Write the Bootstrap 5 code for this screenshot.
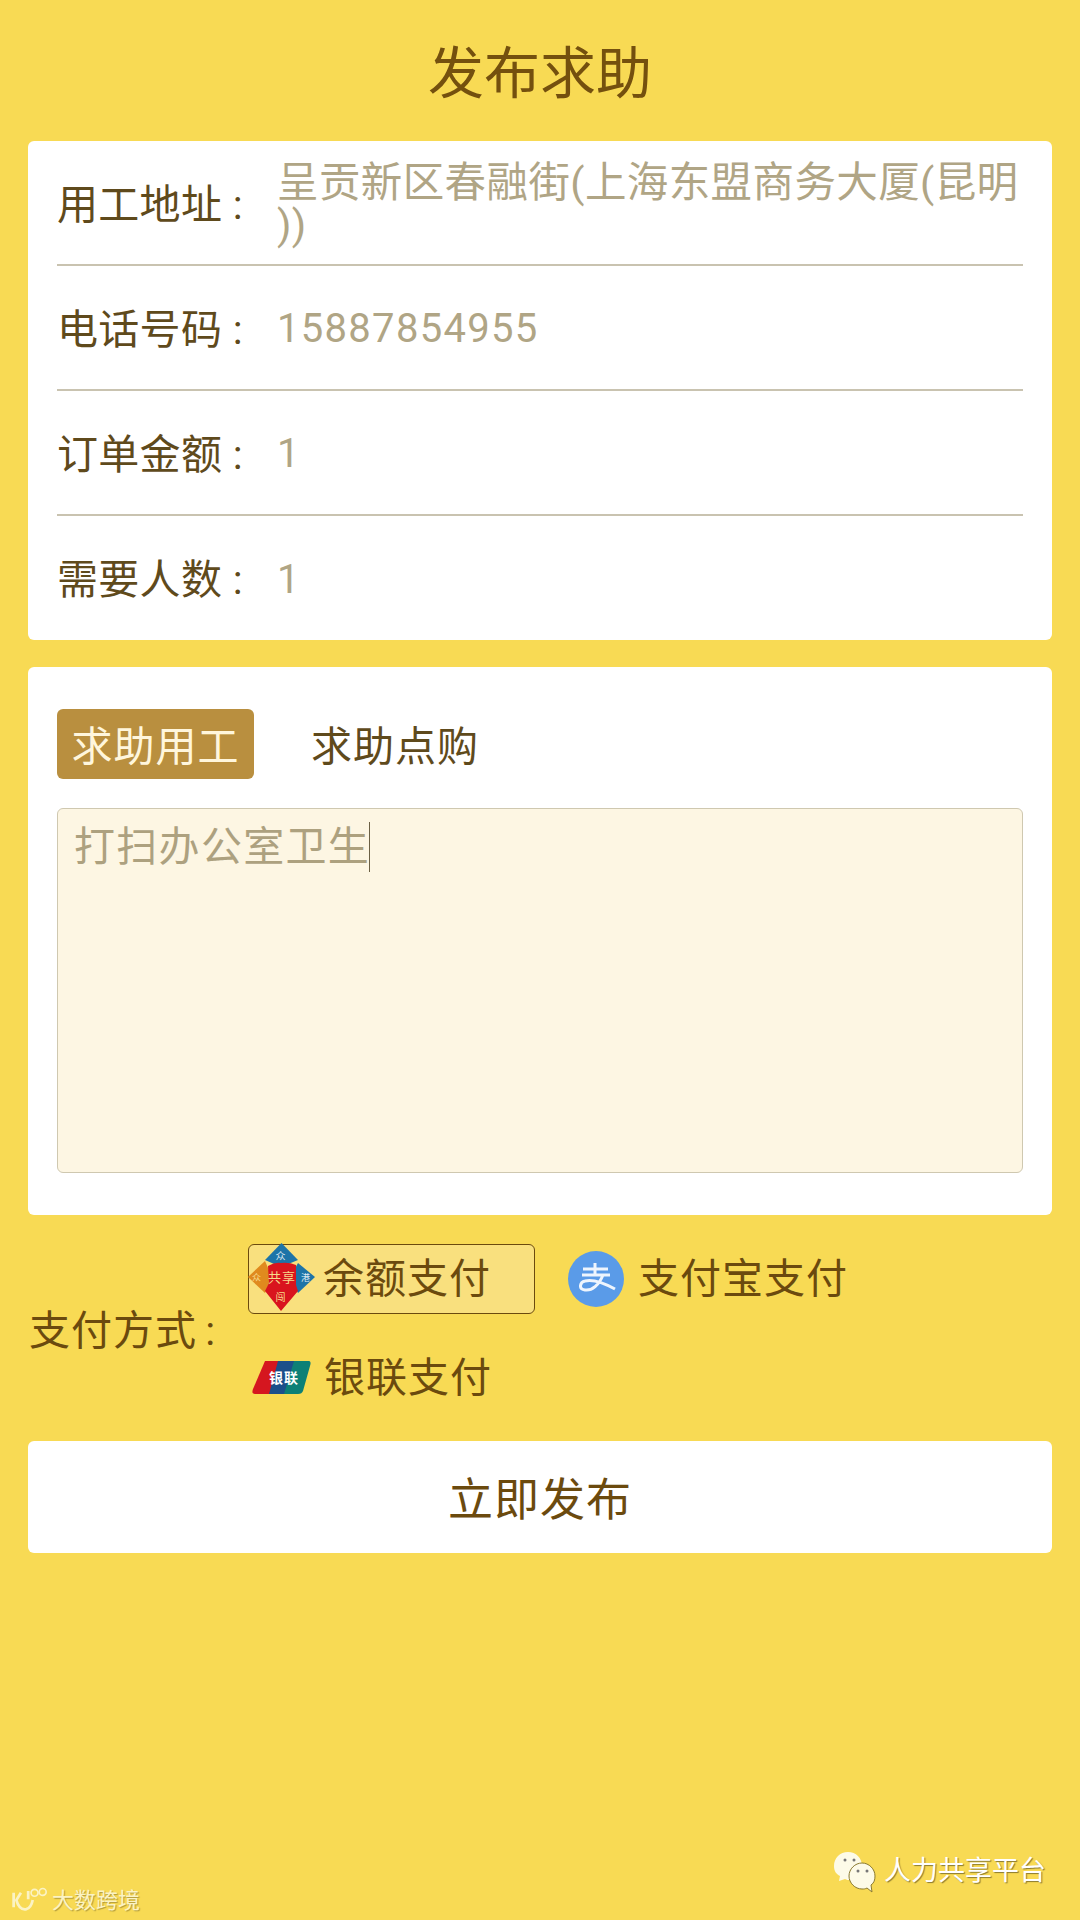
<!DOCTYPE html>
<html lang="zh-CN">
<head>
  <meta charset="UTF-8">
  <meta name="viewport" content="width=device-width, initial-scale=1.0">
  <title>发布求助</title>
  <link href="https://cdn.jsdelivr.net/npm/bootstrap@5.3.0/dist/css/bootstrap.min.css" rel="stylesheet">
  <style>
    body {
      background-color: #f8da54;
      font-family: Roboto, "Noto Sans CJK SC", sans-serif;
      color: #6b4a0e;
      width: 1080px;
      height: 1920px;
      position: relative;
      overflow: hidden;
    }
    .page-title {
      font-size: 56px;
      font-weight: 400;
      line-height: 148px;
      height: 141px;
      margin: 0;
      color: #74500e;
    }
    .panel {
      margin: 0 28px;
      border-radius: 6px;
      background: #fff;
    }
    .info-list { padding: 0 29px; height: 499px; }
    .info-row {
      height: 125px;
      border-bottom: 2px solid #c9c3b0;
      font-size: 40px;
      letter-spacing: 1px;
    }
    .info-row:last-child { border-bottom: 0; height: 124px; }
    .info-label { width: 220px; flex: none; color: #5f4a1c; font-size: 41px; letter-spacing: .3px; padding-top: 6px; white-space: pre; }
    .info-value { color: #b0a585; line-height: 42px; padding-top: 3px; letter-spacing: 1.3px; }
    .address-text { font-size: 41.5px; letter-spacing: .4px; white-space: nowrap; padding-top: 2px; }
    .help-panel { margin-top: 27px; height: 548px; padding: 42px 29px 0; }
    .tab-on, .tab-off {
      font-size: 41px;
      line-height: 76px;
      height: 70px;
      padding: 0;
      border-radius: 6px;
      border: 0;
      letter-spacing: 1px;
    }
    .tab-on { background: #b98f3f; color: #fff6dc; width: 197px; }
    .tab-off { background: transparent; color: #5f4a1c; margin-left: 57px; }
    .need-box {
      margin-top: 29px;
      height: 365px;
      background: #fdf6e3;
      border: 1px solid #cfc8b0;
      border-radius: 6px;
      padding: 13px 16px;
      font-size: 41px;
      letter-spacing: 1.3px;
      line-height: 50px;
      color: #ada17f;
    }
    .caret-bar {
      display: inline-block;
      width: 1px;
      height: 50px;
      background: #6b6045;
      vertical-align: top;
      margin-left: -1px;
    }
    .pay-wrap { margin: 28px 28px 0 29px; height: 170px; }
    .pay-label { width: 219px; flex: none; font-size: 41px; letter-spacing: 1px; word-spacing: -3px; padding-top: 7px; white-space: pre; }
    .pay-opts { column-gap: 33px; }
    .pay-opt {
      height: 70px;
      font-size: 41px;
      letter-spacing: 1px;
      color: #6b4a0e;
      padding: 0;
      gap: 8px;
    }
    .pay-opt span { padding-top: 3px; }
    .pay-opt svg { flex: none; }
    .pay-on {
      width: 287px;
      border: 1px solid #6b4a0e;
      border-radius: 6px;
      background: #f9e07e;
    }
    .pay-on svg { margin: -4px 0 0 -1px; }
    .pay-ali { gap: 14px; }
    .pay-union { margin-top: 29px; gap: 13px; padding-left: 4px; width: 100%; }
    .submit-btn {
      display: block;
      width: 1024px;
      height: 112px;
      margin: 28px 28px 0;
      padding-top: 13px;
      background: #fff;
      border: 0;
      border-radius: 6px;
      font-size: 45px;
      color: #6b4a0e;
      letter-spacing: 1px;
    }
    .mark-right {
      position: absolute;
      left: 834px;
      top: 1848px;
      gap: 6px;
      font-size: 27px;
      color: #fff;
      text-shadow: 1px 1px 1px #8a7a30;
    }
    .mark-left {
      position: absolute;
      left: 10px;
      top: 1884px;
      gap: 2px;
      font-size: 22px;
      color: #fbf3c4;
      text-shadow: 1px 1px 1px #b09a3c;
    }
  </style>
</head>
<body>
  <h1 class="page-title text-center">发布求助</h1>

  <div class="panel info-list">
    <div class="info-row d-flex align-items-center">
      <div class="info-label">用工地址 :</div>
      <div class="info-value address-text">呈贡新区春融街(上海东盟商务大厦(昆明<br>))</div>
    </div>
    <div class="info-row d-flex align-items-center">
      <div class="info-label">电话号码 :</div>
      <div class="info-value">15887854955</div>
    </div>
    <div class="info-row d-flex align-items-center">
      <div class="info-label">订单金额 :</div>
      <div class="info-value">1</div>
    </div>
    <div class="info-row d-flex align-items-center">
      <div class="info-label">需要人数 :</div>
      <div class="info-value">1</div>
    </div>
  </div>

  <div class="panel help-panel">
    <div class="d-flex">
      <button class="btn tab-on" type="button">求助用工</button>
      <button class="btn tab-off" type="button">求助点购</button>
    </div>
    <div class="need-box">打扫办公室卫生<span class="caret-bar"></span></div>
  </div>

  <div class="pay-wrap d-flex align-items-center">
    <div class="pay-label">支付方式 :</div>
    <div class="pay-opts d-flex flex-wrap">
      <div class="pay-opt pay-on d-flex align-items-center">
        <svg width="67" height="68" viewBox="0 0 67 68">
          <path d="M0 34 L17 18 L24 34 L17 50 Z" fill="#e08a1e"/>
          <path d="M33.5 0 L50 17 L33 24 L17 17 Z" fill="#1d74a8"/>
          <path d="M50 20 L67 34 L50 50 L42 34 Z" fill="#1d74a8"/>
          <path d="M20 23 Q27 19 33 20 Q41 19 48 22 L48 42 L50 48 L33 68 L17 48 L21 40 Z" fill="#d9141e"/>
          <text x="34" y="39" text-anchor="middle" font-size="13" fill="#f7d98a" font-family="Noto Sans CJK SC">共享</text>
          <text x="33" y="17" text-anchor="middle" font-size="10" fill="#dfe9f0" font-family="Noto Sans CJK SC">众</text>
          <text x="58" y="38" text-anchor="middle" font-size="9" fill="#dfe9f0" font-family="Noto Sans CJK SC">港</text>
          <text x="9" y="38" text-anchor="middle" font-size="9" fill="#f7d98a" font-family="Noto Sans CJK SC">众</text>
          <text x="33" y="58" text-anchor="middle" font-size="10" fill="#f7d98a" font-family="Noto Sans CJK SC">闯</text>
        </svg>
        <span>余额支付</span>
      </div>
      <div class="pay-opt pay-ali d-flex align-items-center">
        <svg width="56" height="56" viewBox="0 0 56 56">
          <circle cx="28" cy="28" r="28" fill="#5a9be8"/>
          <path d="M15 18 H40 M27 12 V24 M14 24 H42 M35 24 C31 34 24 40 17 39 C10 38 12 31 17 30 C25 28 36 32 47 38" fill="none" stroke="#eef5fd" stroke-width="3"/>
        </svg>
        <span>支付宝支付</span>
      </div>
      <div class="pay-opt pay-union d-flex align-items-center">
        <svg width="59" height="33" viewBox="0 0 59 33">
          <path d="M13 0 H32 L22 33 H3 C0 33 0 31 1 28 Z" fill="#d5161f"/>
          <path d="M26 0 H46 L36 33 H17 Z" fill="#1c4f8a"/>
          <path d="M42 0 H56 C59 0 59 2 58 5 L51 30 C50 32 49 33 46 33 H32 Z" fill="#0d8076"/>
          <text x="32" y="22" text-anchor="middle" font-size="14" font-weight="700" letter-spacing="1" fill="#fff" font-family="Noto Sans CJK SC">银联</text>
        </svg>
        <span>银联支付</span>
      </div>
    </div>
  </div>

  <button class="btn submit-btn" type="button">立即发布</button>

  <div class="mark-right d-flex align-items-center">
    <svg width="44" height="46" viewBox="0 0 44 46">
      <path d="M14 4 C6 4 0 10 0 18 C0 23 2 26 6 28 L5 33 L11 31 C13 32 14 32 15 32 C22 32 28 25 28 18 C28 10 22 4 14 4 Z" fill="#fdfbe8"/>
      <path d="M28 15 C21 15 15 21 15 28 C15 35 21 41 28 41 C30 41 31 41 33 40 L38 44 L37 37 C40 35 41 32 41 28 C41 21 35 15 28 15 Z" fill="#fdfbe8" stroke="#8a7a30" stroke-width="1"/>
      <circle cx="11" cy="12" r="1.5" fill="#777"/><circle cx="20" cy="12" r="1.5" fill="#777"/>
      <circle cx="24" cy="23" r="1.5" fill="#777"/><circle cx="33" cy="23" r="1.5" fill="#777"/>
    </svg>
    <span>人力共享平台</span>
  </div>

  <div class="mark-left d-flex align-items-center">
    <svg width="40" height="28" viewBox="0 0 44 30" fill="none" stroke="#fbf3c4" stroke-width="3">
      <path d="M4 6 V22 M12 6 L7 14 C9 21 13 25 18 24 C22 23 24 19 25 14 M20 4 V13"/>
      <circle cx="27" cy="6" r="3.8" stroke-width="1.8"/><circle cx="36" cy="5" r="3.8" stroke-width="1.8"/>
    </svg>
    <span>大数跨境</span>
  </div>

  <script src="https://cdn.jsdelivr.net/npm/bootstrap@5.3.0/dist/js/bootstrap.bundle.min.js"></script>
</body>
</html>
